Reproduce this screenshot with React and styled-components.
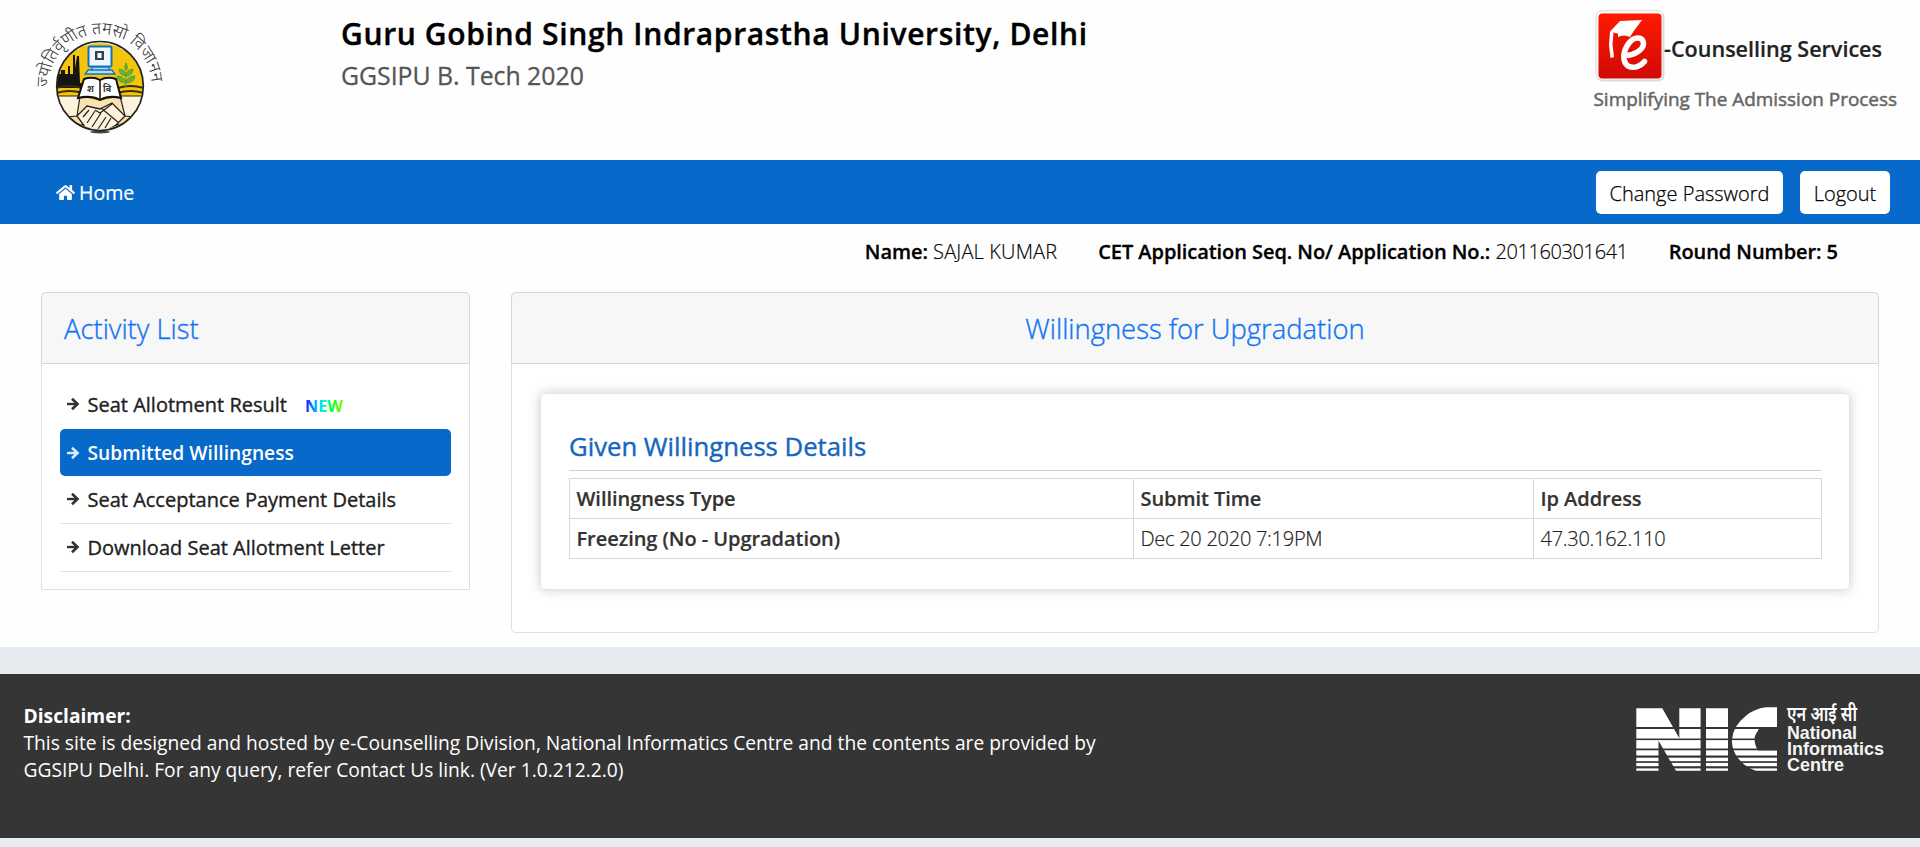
import React from 'react';
import styled, { createGlobalStyle, css } from 'styled-components';
import { FaHome } from 'react-icons/fa';

const GlobalStyle = createGlobalStyle`
  * { box-sizing: border-box; }
  body {
    margin: 0;
    background: #e7eaee;
    font-family: "Open Sans", "Noto Sans", sans-serif;
    font-size: 20px;
    font-weight: 300;
    color: #000;
    overflow: hidden;
  }
  svg { display: block; flex: none; overflow: visible; }
`;

const Page = styled.div`
  min-height: 847px;
`;
const Main = styled.div`
  background: #fefefe;
  height: 647px;
`;
const Header = styled.header`
  display: flex;
  align-items: flex-start;
  height: 160px;
  padding: 0 20px 0 30px;
`;
const SealBox = styled.div`
  padding-top: 10px;
`;
const Titles = styled.div`
  flex: 1;
  padding: 14px 0 0 169px;
`;
const University = styled.h1`
  margin: 0;
  font-size: 30px;
  font-weight: 600;
  letter-spacing: 0.65px;
  line-height: 40px;
  white-space: nowrap;
  -webkit-text-stroke: 0.4px #000;
`;
const Course = styled.div`
  font-size: 24.8px;
  font-weight: 400;
  line-height: 34px;
  margin-top: 4px;
  color: #555;
  -webkit-text-stroke: 0.3px #555;
`;

const NavBar = styled.nav`
  display: flex;
  align-items: center;
  justify-content: space-between;
  height: 64px;
  padding: 0 30px 0 56px;
  background: #0769c9;
`;
const HomeLink = styled.a`
  display: flex;
  align-items: center;
  gap: 4px;
  color: #fff;
  font-weight: 400;
  font-size: 19.6px;
  -webkit-text-stroke: 0.2px #fff;
`;
const NavButtons = styled.div`
  display: flex;
  gap: 17px;
  padding-top: 1px;
`;
const NavButton = styled.button`
  width: ${(p) => p.$width}px;
  height: 43px;
  padding: 1px 0 0;
  border: 0;
  border-radius: 5px;
  background: #fff;
  color: #000;
  font: 300 20px "Open Sans", sans-serif;
  white-space: nowrap;
  -webkit-text-stroke: 0.25px #000;
`;

const Candidate = styled.div`
  display: flex;
  justify-content: flex-end;
  gap: 41px;
  height: 68px;
  padding: 13px 82px 0 0;
  line-height: 29px;
  white-space: nowrap;
  b {
    font-weight: 600;
    letter-spacing: -0.06px;
    -webkit-text-stroke: 0.3px #000;
  }
`;
const Value = styled.span`
  letter-spacing: ${(p) => p.$spacing}px;
  -webkit-text-stroke: 0.15px #000;
`;

const Columns = styled.div`
  display: flex;
  align-items: flex-start;
  gap: 41px;
  padding: 0 41px;
`;
const Panel = styled.section`
  width: ${(p) => p.$width}px;
  height: ${(p) => p.$height}px;
  border: 1px solid #e0e0e0;
  border-radius: ${(p) => p.$radius};
  background: #fff;
`;
const PanelHead = styled.h2`
  margin: -1px -1px 0;
  height: 72px;
  line-height: 71px;
  padding: 0 22px;
  border: 1px solid #d6d6d6;
  border-radius: 5px 5px 0 0;
  background: #f7f7f7;
  color: #1074f2;
  font-size: 27.4px;
  font-weight: 300;
  -webkit-text-stroke: 0.35px #1074f2;
  text-align: ${(p) => (p.$center ? 'center' : 'left')};
`;
const Activities = styled.ul`
  list-style: none;
  margin: 0;
  padding: 17px 18px 0;
`;
const Activity = styled.li`
  display: flex;
  align-items: center;
  height: 48px;
  padding: 0 7px 1px;
  border-bottom: 1px solid ${(p) => (p.$line ? '#e2e2e2' : 'transparent')};
  color: #212121;
  font-weight: 400;
  -webkit-text-stroke: 0.35px #212121;
  white-space: nowrap;
  ${(p) => p.$active && css`
    height: 47px;
    padding-bottom: 0;
    border: 0;
    border-radius: 5px;
    background: #0769c9;
    color: #fff;
    font-size: 19.25px;
    font-weight: 600;
    -webkit-text-stroke: 0;
  `}
`;
const ActivityText = styled.span`
  margin-left: 7.5px;
`;
const NewBadge = styled.svg`
  margin: 3px 0 0 18px;
`;

const Card = styled.div`
  height: 197px;
  margin: 29px 28px 0;
  padding: 34px 28px 0;
  border: 1px solid #e4e4e4;
  border-radius: 5px;
  box-shadow: 0 0 12px rgba(0, 0, 0, 0.2);
`;
const CardTitle = styled.h3`
  height: 43px;
  margin: 0 0 7px;
  line-height: 38px;
  border-bottom: 1px solid #cfcfcf;
  color: #1565c0;
  font-size: 25.7px;
  font-weight: 400;
  -webkit-text-stroke: 0.4px #1565c0;
`;
const Table = styled.table`
  width: 1252px;
  table-layout: fixed;
  border-collapse: collapse;
  color: #333;
`;
const Cell = styled.td`
  width: ${(p) => p.$width}px;
  height: 40px;
  padding: 0 6.5px;
  border: 1px solid #d6d9dc;
  line-height: 28px;
  font-weight: ${(p) => (p.$strong ? 600 : 300)};
  letter-spacing: ${(p) => (p.$strong ? -0.05 : -0.27)}px;
  color: ${(p) => (p.$strong ? '#333' : '#222')};
  -webkit-text-stroke: 0.2px currentColor;
`;

const Footer = styled.footer`
  display: flex;
  justify-content: space-between;
  height: 164px;
  margin-top: 27px;
  padding: 28px 32px 0 23.5px;
  background: #353535;
  color: #fff;
  font-size: 19.23px;
  font-weight: 400;
  line-height: 27px;
`;
const Disclaimer = styled.p`
  width: 1090px;
  margin: 0;
  white-space: nowrap;
`;

function UniversitySeal() {
  return (
    <svg width="142" height="135" viewBox="30 10 142 135">
      <defs>
        <path id="motto" d="M49.2 94 A51.5 51.5 0 1 1 150.8 94" />
        <clipPath id="disc"><circle cx="100" cy="86" r="43" /></clipPath>
      </defs>
      <text fontSize="17" fill="#333" fontFamily='"Noto Sans", "Noto Sans Devanagari", sans-serif'>
        <textPath href="#motto" startOffset="7">ज्योतिर्वृणीत तमसो विजानन</textPath>
      </text>
      <ellipse cx="100" cy="132" rx="10" ry="1.500" fill="#444" />
      <g clipPath="url(#disc)">
        <rect x="55" y="40" width="90" height="95" fill="#f5c50c" />
        <path d="M55 74h6v-4h4v4h3v-8h2v8h3V55h2v13l2-12h2l1 27h2v5H55z" fill="#17150f" />
        <path d="M56 88q12-4 26 0M56 93q13-4 27 0M118 88q12-4 26 0M117 93q14-4 27 0" fill="none" stroke="#3b2c08" strokeWidth="2" />
        <path d="M55 96h25l20 5 20-5h26v40H55z" fill="#fae3b0" />
        <path d="M58 96l22 0-3 20-22 2zM120 96l24 0v22l-19-2z" fill="#fdf3d8" stroke="#222" strokeWidth="1.2" />
        <path d="M77 116l10-10 13 3 12-6 13 13-9 9-14 8-14-2z" fill="#fff2dc" stroke="#222" strokeWidth="1.3" />
        <path d="M87 123l8-12M92 127l9-14M98 129l8-12M105 128l6-10M101 108l18 15M112 104l-12 9-5-3M83 117l6-7" fill="none" stroke="#222" strokeWidth="1.2" />
        <path d="M63 124l20 0 8 12H68zM117 124h22l-10 12h-20z" fill="#111" />
      </g>
      <ellipse cx="100" cy="86" rx="43.300" ry="44.500" fill="none" stroke="#222" strokeWidth="1.7" />
      <path d="M126 88V72M126 83q-8 0-9-7 8 0 9 7q8 0 9-7-8 0-9 7M126 76q-7-1-7-7 7 1 7 7q7-1 7-7-7 1-7 7M126 71q-3-4 0-8 3 4 0 8" fill="#6bb336" stroke="#55a22f" strokeWidth="1" />
      <rect x="88.5" y="46.500" width="23" height="20" rx="1.500" fill="#eef7fd" stroke="#1672b9" strokeWidth="2" />
      <rect x="95" y="51" width="9" height="9" fill="#34444f" />
      <rect x="97.500" y="53" width="4" height="5" fill="#fff" />
      <path d="M92 67h17v3H92zM88 70h24l3 4H85z" fill="#a9dcf5" stroke="#1672b9" strokeWidth="1.300" />
      <path d="M84 79q9-3 16 1q7-4 16-1l5 19q-12-3-21 2q-9-5-22-2z" fill="#fff" stroke="#111" strokeWidth="2" />
      <path d="M100 80v20" stroke="#111" strokeWidth="1.500" />
      <text x="87" y="92" fontSize="9" fontWeight="700" fill="#333">श</text>
      <text x="103" y="92" fontSize="9" fontWeight="700" fill="#333">वि</text>
    </svg>
  );
}

function CounsellingLogo() {
  return (
    <svg width="310" height="120" viewBox="1590 0 310 120">
      <defs>
        <linearGradient id="badge" x1="0" y1="0" x2="0" y2="1">
          <stop offset="0" stopColor="#ff1a00" />
          <stop offset="1" stopColor="#cf0a05" />
        </linearGradient>
      </defs>
      <rect x="1596.5" y="11.500" width="68" height="70" rx="6" fill="#ddd" />
      <rect x="1596" y="10.500" width="67" height="69.500" rx="6" fill="#f7f7f7" stroke="#d8d8d8" strokeWidth="0.800" />
      <rect x="1598.500" y="13.500" width="63" height="65" rx="4" fill="url(#badge)" />
      <path d="M1624.500 55.500 C1633 56 1643.500 50 1643.500 43.500 C1643 36.500 1634.500 36 1629 43 C1623 51 1621.500 61 1628 66 C1634 69 1641 66 1644.500 61.500" fill="none" stroke="#fff" strokeWidth="5.500" strokeLinecap="round" />
      <path d="M1610 31.500L1620 21l22-1-10 13.500q-8-2-15 0z" fill="#fff" />
      <path d="M1618 32q8-3 15 0l-3 5q-6-3-12 0z" fill="#fff" />
      <path d="M1610 31.500l3.500 1-1 12 1.500 12.500-3.500 1-1.500-13z" fill="#fff" />
      <g fontFamily='"Open Sans", sans-serif'>
        <text x="1664" y="57" fontSize="21.700" fontWeight="600" fill="#222" stroke="#222" strokeWidth="0.200" textLength="218" lengthAdjust="spacingAndGlyphs">-Counselling Services</text>
        <text x="1593.500" y="106" fontSize="18.600" fontWeight="400" fill="#666" stroke="#666" strokeWidth="0.500" textLength="303.500" lengthAdjust="spacingAndGlyphs">Simplifying The Admission Process</text>
      </g>
    </svg>
  );
}

function NicLogo() {
  const gaps = [[727, 2], [738.5, 1.6], [748.5, 1.8], [755.5, 2.2], [761.2, 1.7], [766.2, 2.2]];
  return (
    <svg width="256" height="90" viewBox="1632 702 256 90">
      <g fill="#fff">
        <path d="M1636.300 708.300h26l17 30v-30h21.300v62.500H1676l-17.500-30v30h-22.200z" />
        <path d="M1706 708.300h22v62.500h-22z" />
        <path d="M1777 707.300v20h-14q-8 4-8.500 12 .5 7 3.500 11h19v20.500h-21q-10-3-17.500-12-7-9-6.500-19 1-14 14-24 8-7 20-8.500z" />
      </g>
      <path d="M1777 728.500v21.700h-19q-5-11 1-21.700z" fill="#353535" />
      {gaps.map(([y, h]) => <rect key={y} x="1635" y={y} width="143" height={h} fill="#353535" />)}
      <text x="1787" y="721" fontSize="20" fontWeight="600" fill="#fff" fontFamily='"Noto Sans", "Noto Sans Devanagari", sans-serif' textLength="70" lengthAdjust="spacingAndGlyphs">एन आई सी</text>
      <g fontFamily='"Liberation Sans", sans-serif' fontWeight="700" fontSize="17.800" fill="#f4f4f4">
        <text x="1787" y="738.700" textLength="70" lengthAdjust="spacingAndGlyphs">National</text>
        <text x="1787" y="754.500" textLength="97" lengthAdjust="spacingAndGlyphs">Informatics</text>
        <text x="1787" y="770.500" textLength="57" lengthAdjust="spacingAndGlyphs">Centre</text>
      </g>
    </svg>
  );
}

function ArrowIcon({ color }) {
  return (
    <svg width="13" height="14" viewBox="0 0 13 14" fill="none" stroke={color}>
      <path d="M0 7h10" strokeWidth="2.400" />
      <path d="M5 1.800L10.500 7L5 12.200" strokeWidth="2.600" />
    </svg>
  );
}

function NewLabel() {
  return (
    <NewBadge width="39" height="14" viewBox="0 0 39 14">
      <defs>
        <linearGradient id="rainbow" gradientUnits="userSpaceOnUse" x1="0" y1="0" x2="38" y2="0">
          <stop offset="0" stopColor="#1414ff" />
          <stop offset="0.300" stopColor="#00b4ff" />
          <stop offset="0.500" stopColor="#00ffd0" />
          <stop offset="0.700" stopColor="#00ff30" />
          <stop offset="1" stopColor="#9cf000" />
        </linearGradient>
      </defs>
      <text x="0" y="12.500" fontFamily='"Noto Sans", sans-serif' fontSize="15.500" fontWeight="700" fill="url(#rainbow)" stroke="none" textLength="38" lengthAdjust="spacingAndGlyphs">NEW</text>
    </NewBadge>
  );
}

const activities = [
  { text: 'Seat Allotment Result', fresh: true },
  { text: 'Submitted Willingness', active: true },
  { text: 'Seat Acceptance Payment Details', line: true },
  { text: 'Download Seat Allotment Letter', line: true },
];

export default function App() {
  return (
    <Page>
      <GlobalStyle />
      <Main>
        <Header>
          <SealBox><UniversitySeal /></SealBox>
          <Titles>
            <University>Guru Gobind Singh Indraprastha University, Delhi</University>
            <Course>GGSIPU B. Tech 2020</Course>
          </Titles>
          <CounsellingLogo />
        </Header>
        <NavBar>
          <HomeLink><FaHome size={19} />Home</HomeLink>
          <NavButtons>
            <NavButton $width={187}>Change Password</NavButton>
            <NavButton $width={90}>Logout</NavButton>
          </NavButtons>
        </NavBar>
        <Candidate>
          <span><b>Name:</b> <Value $spacing={0.15}>SAJAL KUMAR</Value></span>
          <span><b>CET Application Seq. No/ Application No.:</b> <Value $spacing={-0.4}>201160301641</Value></span>
          <b>Round Number: 5</b>
        </Candidate>
        <Columns>
          <Panel $width={429} $height={298} $radius="5px 5px 0 0">
            <PanelHead>Activity List</PanelHead>
            <Activities>
              {activities.map((a) => (
                <Activity key={a.text} $active={a.active} $line={a.line}>
                  <ArrowIcon color={a.active ? '#d8ecff' : '#333'} />
                  <ActivityText>{a.text}</ActivityText>
                  {a.fresh && <NewLabel />}
                </Activity>
              ))}
            </Activities>
          </Panel>
          <Panel $width={1368} $height={341} $radius="5px">
            <PanelHead $center>Willingness for Upgradation</PanelHead>
            <Card>
              <CardTitle>Given Willingness Details</CardTitle>
              <Table>
                <tbody>
                  <tr>
                    <Cell as="th" align="left" $width={564} $strong>Willingness Type</Cell>
                    <Cell as="th" align="left" $width={400} $strong>Submit Time</Cell>
                    <Cell as="th" align="left" $width={288} $strong>Ip Address</Cell>
                  </tr>
                  <tr>
                    <Cell $strong>Freezing (No - Upgradation)</Cell>
                    <Cell>Dec 20 2020 7:19PM</Cell>
                    <Cell>47.30.162.110</Cell>
                  </tr>
                </tbody>
              </Table>
            </Card>
          </Panel>
        </Columns>
      </Main>
      <Footer>
        <Disclaimer>
          <b>Disclaimer:</b><br />
          This site is designed and hosted by e-Counselling Division, National Informatics Centre and the contents are provided by<br />
          GGSIPU Delhi. For any query, refer Contact Us link. (Ver 1.0.212.2.0)
        </Disclaimer>
        <NicLogo />
      </Footer>
    </Page>
  );
}
